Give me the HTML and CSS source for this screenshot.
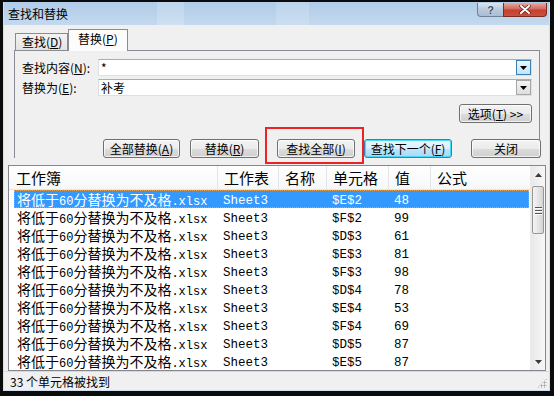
FILE: index.html
```html
<!DOCTYPE html>
<html>
<head>
<meta charset="utf-8">
<link rel="stylesheet" href="styles.css">
</head>
<body>
<div class="window">
  <div class="titlebar">
    <span class="title">查找和替换</span>
    <div class="cbtns">
      <div class="cbtn help">?</div>
      <div class="cbtn close">
        <svg width="12" height="9" viewBox="0 0 12 9"><path d="M2 1 L10 8 M10 1 L2 8" stroke="#5a1c16" stroke-width="3.4" stroke-linecap="round"/><path d="M2 1 L10 8 M10 1 L2 8" stroke="#ffffff" stroke-width="2" stroke-linecap="round"/></svg>
      </div>
    </div>
  </div>
  <div class="client">
    <div class="tabs">
      <div class="tab">查找(<u>D</u>)</div>
      <div class="tab active">替换(<u>P</u>)</div>
    </div>
    <div class="panel">
      <div class="field-row">
        <span class="label">查找内容(<u>N</u>):</span>
        <div class="combo"><span class="val">*</span><span class="drop hot"><svg width="7" height="4" viewBox="0 0 7 4"><path d="M0 0 H7 L3.5 4 Z" fill="#000"/></svg></span></div>
      </div>
      <div class="field-row gap">
        <span class="label">替换为(<u>E</u>):</span>
        <div class="combo"><span class="val">补考</span><span class="drop"><svg width="7" height="4" viewBox="0 0 7 4"><path d="M0 0 H7 L3.5 4 Z" fill="#000"/></svg></span></div>
      </div>
      <div class="options-row"><div class="btn opt">选项(<u>T</u>) &gt;&gt;</div></div>
      <div class="actions">
        <div class="btn b-all">全部替换(<u>A</u>)</div>
        <div class="btn b-rep">替换(<u>R</u>)</div>
        <div class="btn b-findall">查找全部(<u>I</u>)</div>
        <div class="btn b-next default">查找下一个(<u>F</u>)</div>
        <div class="btn b-close">关闭</div>
      </div>
    </div>
    <div class="results">
      <div class="list">
        <div class="header">
          <div class="hc first">工作簿</div>
          <div class="hc">工作表</div>
          <div class="hc">名称</div>
          <div class="hc">单元格</div>
          <div class="hc">值</div>
          <div class="hc">公式</div>
        </div>
        <div class="rows">
          <div class="row sel"><span class="c1">将低于<span class="en">60</span>分替换为不及格<span class="en">.xlsx</span></span><span class="c">Sheet3</span><span class="c"></span><span class="c">$E$2</span><span class="c">48</span><span class="c"></span></div>
          <div class="row"><span class="c1">将低于<span class="en">60</span>分替换为不及格<span class="en">.xlsx</span></span><span class="c">Sheet3</span><span class="c"></span><span class="c">$F$2</span><span class="c">99</span><span class="c"></span></div>
          <div class="row"><span class="c1">将低于<span class="en">60</span>分替换为不及格<span class="en">.xlsx</span></span><span class="c">Sheet3</span><span class="c"></span><span class="c">$D$3</span><span class="c">61</span><span class="c"></span></div>
          <div class="row"><span class="c1">将低于<span class="en">60</span>分替换为不及格<span class="en">.xlsx</span></span><span class="c">Sheet3</span><span class="c"></span><span class="c">$E$3</span><span class="c">81</span><span class="c"></span></div>
          <div class="row"><span class="c1">将低于<span class="en">60</span>分替换为不及格<span class="en">.xlsx</span></span><span class="c">Sheet3</span><span class="c"></span><span class="c">$F$3</span><span class="c">98</span><span class="c"></span></div>
          <div class="row"><span class="c1">将低于<span class="en">60</span>分替换为不及格<span class="en">.xlsx</span></span><span class="c">Sheet3</span><span class="c"></span><span class="c">$D$4</span><span class="c">78</span><span class="c"></span></div>
          <div class="row"><span class="c1">将低于<span class="en">60</span>分替换为不及格<span class="en">.xlsx</span></span><span class="c">Sheet3</span><span class="c"></span><span class="c">$E$4</span><span class="c">53</span><span class="c"></span></div>
          <div class="row"><span class="c1">将低于<span class="en">60</span>分替换为不及格<span class="en">.xlsx</span></span><span class="c">Sheet3</span><span class="c"></span><span class="c">$F$4</span><span class="c">69</span><span class="c"></span></div>
          <div class="row"><span class="c1">将低于<span class="en">60</span>分替换为不及格<span class="en">.xlsx</span></span><span class="c">Sheet3</span><span class="c"></span><span class="c">$D$5</span><span class="c">87</span><span class="c"></span></div>
          <div class="row"><span class="c1">将低于<span class="en">60</span>分替换为不及格<span class="en">.xlsx</span></span><span class="c">Sheet3</span><span class="c"></span><span class="c">$E$5</span><span class="c">87</span><span class="c"></span></div>
        </div>
      </div>
      <div class="vscroll">
        <div class="sb-btn"><svg width="7" height="4" viewBox="0 0 7 4"><path d="M0 4 H7 L3.5 0 Z" fill="#3a3a3a"/></svg></div>
        <div class="sb-track">
          <div class="thumb"><span></span><span></span><span></span></div>
        </div>
        <div class="sb-btn"><svg width="7" height="4" viewBox="0 0 7 4"><path d="M0 0 H7 L3.5 4 Z" fill="#3a3a3a"/></svg></div>
      </div>
    </div>
    <div class="status"><span>33 个单元格被找到</span><span class="grip"></span></div>
    <div class="annot"></div>
  </div>
</div>
</body>
</html>
```
FILE: styles.css
```css
* { box-sizing: border-box; margin: 0; padding: 0; }
html, body { width: 554px; height: 396px; overflow: hidden; }
body {
  background: #0b0b0b;
  padding: 2px 4px 5px 3px;
  font-family: "Noto Sans CJK SC", "Noto Sans", sans-serif;
  font-size: 12px;
  color: #000;
}
u { text-decoration: underline; text-underline-offset: 1px; }

.window {
  height: 389px;
  background: #cfe0f2;
  padding: 0 1px 1px 1px;
  display: flex;
  flex-direction: column;
}

.titlebar {
  height: 23px;
  display: flex;
  justify-content: space-between;
  align-items: flex-start;
  background:
    linear-gradient(90deg, transparent 0 28%, rgba(255,255,255,0.18) 28% 33%, transparent 33% 50%, rgba(255,255,255,0.15) 50% 56%, transparent 56%),
    linear-gradient(#b0cce8, #c3d9ef);
}
.title { padding: 5px 0 0 4px; line-height: 13px; font-size: 12px; color: #000; }

.cbtns { display: flex; margin: 1px 2px 0 0; }
.cbtn {
  height: 14px;
  display: flex;
  align-items: center;
  justify-content: center;
  border: 1px solid #6f8196;
  border-top: none;
}
.help {
  width: 26px;
  border-radius: 0 0 0 4px;
  border-right: none;
  background: linear-gradient(#d9e4f0, #b8c9dc 50%, #a9bdd3);
  color: #3c4a5c;
  font-family: "Liberation Sans", sans-serif;
  font-weight: bold;
  font-size: 11px;
  line-height: 12px;
  text-shadow: 0 0 2px #fff;
}
.close {
  width: 44px;
  border-radius: 0 0 4px 0;
  border-color: #7d2a22;
  background: linear-gradient(#e6aaa2, #d46a5e 45%, #c4402f 55%, #c9503e);
}

.client {
  flex: 1;
  background: #f0f0f0;
  position: relative;
  display: flex;
  flex-direction: column;
}

.tabs {
  height: 25px;
  display: flex;
  align-items: flex-end;
  padding-left: 10px;
}
.tab {
  height: 17px;
  width: 53px;
  margin-left: 1px;
  border: 1px solid #898c95;
  border-bottom: none;
  background: linear-gradient(#f3f3f3, #e3e3e3);
  line-height: 15px;
  padding-left: 6px;
  font-size: 12px;
}
.tab.active {
  width: 60px;
  height: 22px;
  margin-left: 0;
  margin-bottom: -1px;
  background: #fcfcfc;
  padding-left: 9px;
  line-height: 18px;
  position: relative;
  z-index: 1;
}

.panel {
  margin-left: 10px;
  width: 526px;
  height: 108px;
  border: 1px solid #898c95;
  border-bottom: none;
  padding: 8px 7px 0 7px;
}
.field-row { display: flex; align-items: center; height: 17px; }
.field-row.gap { margin-top: 3px; }
.label { width: 76px; font-size: 12px; line-height: 17px; }
.combo {
  flex: 1;
  height: 17px;
  background: #fff;
  border: 1px solid #dbdfe6;
  border-top-color: #abadb3;
  display: flex;
  align-items: center;
  justify-content: space-between;
}
.val { padding-left: 2px; line-height: 15px; font-size: 12px; }
.drop {
  width: 15px;
  height: 15px;
  border: 1px solid #a6a6a6;
  background: linear-gradient(#f4f4f4, #dedede);
  display: flex;
  align-items: center;
  justify-content: center;
}
.drop.hot {
  border-color: #3c7fb1;
  background: linear-gradient(#eaf6fd, #bee6fd);
}

.options-row { display: flex; justify-content: flex-end; margin-top: 8px; }
.btn {
  height: 19px;
  border: 1px solid #707070;
  border-radius: 3px;
  background: linear-gradient(#f3f3f3, #ebebeb 50%, #dddddd 51%, #cfcfcf);
  box-shadow: inset 0 0 0 1px rgba(255,255,255,0.7);
  display: flex;
  align-items: center;
  justify-content: center;
  font-size: 12px;
  line-height: 15px;
  flex-shrink: 0;
}
.opt { width: 73px; }

.actions { display: flex; margin-top: 16px; }
.b-all { margin-left: 81px; width: 77px; }
.b-rep { margin-left: 10px; width: 69px; }
.b-findall { margin-left: 18px; width: 78px; }
.b-next { margin-left: 9px; width: 88px; }
.b-close { margin-left: 19px; width: 70px; }
.btn.default {
  border-color: #3c7fb1;
  box-shadow: inset 0 0 0 1px #48d7fb;
  background: linear-gradient(#eaf6fd, #d9f0fc 50%, #bee6fd 51%, #a7d9f5);
}

.results {
  margin: 7px 3px 0 4px;
  height: 206px;
  border: 1px solid #828790;
  background: #fff;
  display: flex;
}
.list { flex: 1; display: flex; flex-direction: column; min-width: 0; }
.header {
  height: 24px;
  display: grid;
  grid-template-columns: 209px 61px 48px 62px 42px 1fr;
  background: linear-gradient(#ffffff, #f6f7f8);
  border-bottom: 1px solid #e3e5e8;
}
.hc {
  font-size: 15px;
  line-height: 23px;
  padding-left: 6px;
  border-right: 1px solid #e3e5e8;
  color: #000;
}
.hc.first { padding-left: 7px; }
.hc:last-child { border-right: none; }

.rows { margin-left: 5px; margin-right: 1px; }
.row {
  height: 18px;
  display: grid;
  grid-template-columns: 204px 61px 48px 62px 42px 1fr;
  align-items: center;
  white-space: nowrap;
  font-size: 14px;
  line-height: 18px;
}
.row.sel {
  background: #3399ff;
  color: #fff;
  outline: 1px dotted #e0a050;
  outline-offset: -1px;
}
.c1 { padding-left: 3px; font-size: 14px; line-height: 18px; }
.en { font-family: "Liberation Mono", monospace; font-size: 12px; }
.c { font-family: "Liberation Mono", monospace; font-size: 12.5px; padding-left: 5px; line-height: 18px; }

.vscroll {
  width: 15px;
  display: flex;
  flex-direction: column;
  background: linear-gradient(90deg, #e9e9e9, #f7f7f7);
  border-left: 1px solid #ececec;
}
.sb-btn {
  height: 17px;
  display: flex;
  align-items: center;
  justify-content: center;
}
.sb-track { flex: 1; padding-top: 3px; }
.thumb {
  margin: 0 1px;
  height: 48px;
  border: 1px solid #979797;
  border-radius: 2px;
  background: linear-gradient(90deg, #f4f4f4, #e6e6e6 50%, #d4d4d4);
  display: flex;
  flex-direction: column;
  align-items: center;
  justify-content: center;
  gap: 2px;
}
.thumb span { width: 7px; height: 1px; background: #555; box-shadow: 0 1px 0 #fff; }

.status {
  flex: 1;
  border-top: 1px solid #d9d9d9;
  display: flex;
  align-items: center;
  justify-content: space-between;
  padding-left: 6px;
  font-size: 12px;
  line-height: 15px;
}
.grip {
  width: 10px;
  height: 10px;
  align-self: flex-end;
  margin: 0 2px 2px 0;
  background: radial-gradient(circle, #9a9a9a 0.8px, transparent 1.2px) 0 0 / 3px 3px;
  clip-path: polygon(100% 0, 100% 100%, 0 100%);
}

.annot {
  position: absolute;
  left: 261px;
  top: 102px;
  width: 99px;
  height: 37px;
  border: 2px solid #ec2227;
  pointer-events: none;
}
```
